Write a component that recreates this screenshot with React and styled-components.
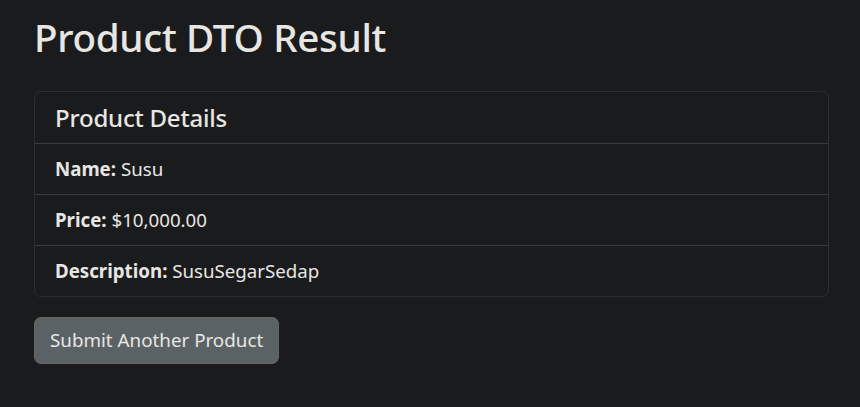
import React from "react";
import styled, { createGlobalStyle } from "styled-components";

const GlobalStyle = createGlobalStyle`
  html, body {
    margin: 0;
    background-color: #1a1b1d;
    color: #e8e6e3;
    font-family: "Noto Sans", "Open Sans", sans-serif;
  }
`;

const Page = styled.div`
  padding: 13px 31px 40px 34px;
`;

const Title = styled.h2`
  margin: 0 0 30px;
  font-size: 38.6px;
  font-weight: 500;
  line-height: 48px;
  letter-spacing: -0.3px;
`;

const Card = styled.div`
  border: 1px solid #2c2e30;
  border-radius: 7px;
  overflow: hidden;
`;

const CardHeader = styled.div`
  padding: 10px 20px;
  border-bottom: 1px solid #393c3e;
`;

const CardTitle = styled.h5`
  margin: 0;
  font-size: 24px;
  font-weight: 500;
  line-height: 31px;
  letter-spacing: -0.2px;
`;

const List = styled.ul`
  list-style: none;
  margin: 0;
  padding: 0;
`;

const Item = styled.li`
  padding: 10px 20px;
  font-size: 18.7px;
  line-height: 30px;
  border-bottom: ${({ $last }) => ($last ? "none" : "1px solid #393c3e")};
  & strong {
    font-weight: 700;
  }
`;

const Button = styled.button`
  margin-top: 20px;
  padding: 7px 15px;
  font-family: inherit;
  font-size: 18.8px;
  line-height: 31px;
  color: #e8e6e3;
  background-color: #5b6266;
  border: 1px solid #6a645a;
  border-radius: 7px;
  cursor: pointer;
`;

const details = [
  { label: "Name:", value: "Susu" },
  { label: "Price:", value: "$10,000.00" },
  { label: "Description:", value: "SusuSegarSedap" },
];

export default function App() {
  return (
    <>
      <GlobalStyle />
      <Page>
        <Title>Product DTO Result</Title>
        <Card>
          <CardHeader>
            <CardTitle>Product Details</CardTitle>
          </CardHeader>
          <List>
            {details.map((d, i) => (
              <Item key={d.label} $last={i === details.length - 1}>
                <strong>{d.label}</strong> {d.value}
              </Item>
            ))}
          </List>
        </Card>
        <Button>Submit Another Product</Button>
      </Page>
    </>
  );
}
